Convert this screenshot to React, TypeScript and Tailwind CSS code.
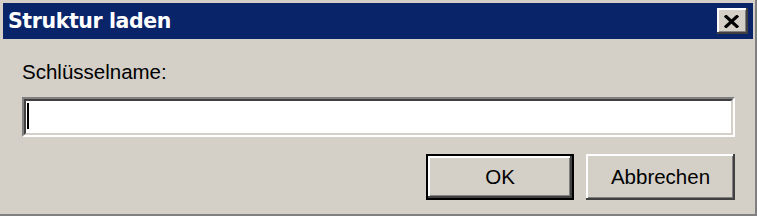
import React from "react";

const raised =
  "shadow-[inset_-2px_-2px_0_#404040,inset_2px_2px_0_#ffffff,inset_-3px_-3px_0_#808080,inset_3px_3px_0_#d4d0c8]";

export default function App() {
  return (
    <div className="w-[757px] h-[216px] bg-[#808080] pr-[2px] pb-[2px]">
      <div
        className="w-full h-full bg-[#d4d0c8] pt-[3px] pl-[3px] pr-[2px] flex flex-col"
        style={{ fontFamily: '"Liberation Sans", Arial, sans-serif' }}
      >
        {/* Title bar */}
        <div className="h-[36px] bg-[#0a246a] flex items-center justify-between pl-[5px] pr-[5px]">
          <span
            className="text-white font-bold text-[20.5px] tracking-[-0.4px] leading-none"
            style={{ fontFamily: '"DejaVu Sans", Tahoma, sans-serif' }}
          >
            Struktur laden
          </span>
          <div className={`w-[31px] h-[26px] bg-[#d4d0c8] flex items-center justify-center pr-[2px] ${raised}`}>
            <svg width="15" height="13" viewBox="0 0 15 13">
              <path d="M1 0.5 L14 12.5 M14 0.5 L1 12.5" stroke="#000" strokeWidth="3.2" fill="none" />
            </svg>
          </div>
        </div>

        {/* Content */}
        <div className="flex flex-col pl-[19px] pr-[18px]">
          <div className="mt-[22px] h-[22px] text-[20.5px] leading-[22px] text-black">Schlüsselname:</div>

          <div className="mt-[14px] h-[40px] border-t-2 border-l-2 border-t-[#808080] border-l-[#808080] border-b-2 border-r-2 border-b-white border-r-white">
            <div className="h-full border-t-2 border-l-2 border-t-[#404040] border-l-[#404040] border-b-2 border-r-2 border-b-[#d4d0c8] border-r-[#d4d0c8] bg-white pl-[1px] pt-[2px]">
              <div className="w-[2px] h-[26px] bg-black" />
            </div>
          </div>

          <div className="mt-[17px] flex justify-end gap-[12px] text-[20.5px] text-black">
            <div className="w-[148px] h-[46px] bg-black p-[2px]">
              <div className={`w-full h-full bg-[#d4d0c8] flex items-center justify-center ${raised}`}>
                OK
              </div>
            </div>
            <div className={`w-[149px] h-[46px] bg-[#d4d0c8] flex items-center justify-center ${raised}`}>
              Abbrechen
            </div>
          </div>
        </div>
      </div>
    </div>
  );
}
